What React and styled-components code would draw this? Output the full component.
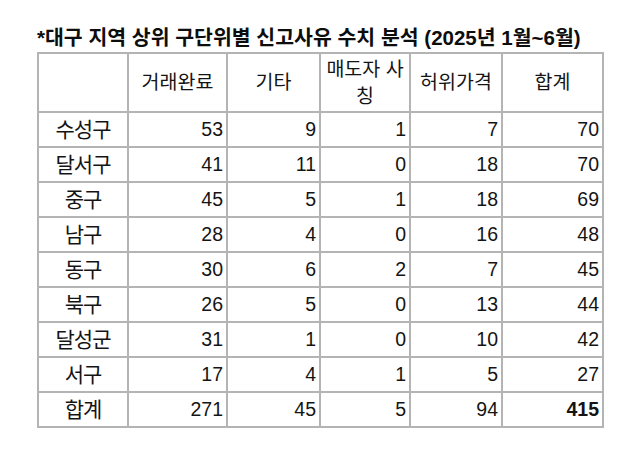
import React from 'react';
import styled, { createGlobalStyle } from 'styled-components';

const GlobalStyle = createGlobalStyle`
  html, body {
    margin: 0;
    padding: 0;
    background: #ffffff;
  }
  body {
    font-family: "Liberation Sans", "Noto Sans CJK KR", sans-serif;
    color: #111111;
  }
`;

const Page = styled.div`
  width: 640px;
  height: 470px;
  box-sizing: border-box;
  padding: 24px 0 0 37px;
  display: flex;
  flex-direction: column;
`;

const Title = styled.div`
  font-size: 20.5px;
  font-weight: 700;
  line-height: 28px;
  color: #0d0d0d;
  white-space: nowrap;
`;

const Table = styled.table`
  width: 565px;
  border-collapse: collapse;
  table-layout: fixed;
  font-size: 19.5px;
  color: #141414;
`;

const HeadCell = styled.th`
  height: 57px;
  padding: 0 3px;
  border: 2px solid #b4b4b4;
  font-weight: 400;
  line-height: 27px;
  text-align: center;
  vertical-align: middle;
`;

const Cell = styled.td`
  height: 33px;
  padding: 0 ${(p) => (p.$label ? '2px' : '3px')};
  border: 2px solid #b4b4b4;
  text-align: ${(p) => (p.$label ? 'center' : 'right')};
  font-size: ${(p) => (p.$label ? '21px' : '19.5px')};
  letter-spacing: ${(p) => (p.$label ? '-1px' : '0')};
  font-weight: ${(p) => (p.$bold ? 700 : 400)};
  line-height: 33px;
  vertical-align: middle;
`;

const columns = ['거래완료', '기타', '매도자 사칭', '허위가격', '합계'];
const widths = [90, 99, 93, 90, 92, 101];

const rows = [
  ['수성구', 53, 9, 1, 7, 70],
  ['달서구', 41, 11, 0, 18, 70],
  ['중구', 45, 5, 1, 18, 69],
  ['남구', 28, 4, 0, 16, 48],
  ['동구', 30, 6, 2, 7, 45],
  ['북구', 26, 5, 0, 13, 44],
  ['달성군', 31, 1, 0, 10, 42],
  ['서구', 17, 4, 1, 5, 27],
  ['합계', 271, 45, 5, 94, 415],
];

export default function App() {
  return (
    <>
      <GlobalStyle />
      <Page>
        <Title>*대구 지역 상위 구단위별 신고사유 수치 분석 (2025년 1월~6월)</Title>
        <Table>
          <colgroup>
            {widths.map((w, i) => (
              <col key={i} style={{ width: w }} />
            ))}
          </colgroup>
          <thead>
            <tr>
              <HeadCell />
              {columns.map((c) => (
                <HeadCell key={c}>{c}</HeadCell>
              ))}
            </tr>
          </thead>
          <tbody>
            {rows.map((r, ri) => (
              <tr key={r[0]}>
                {r.map((v, ci) => (
                  <Cell
                    key={ci}
                    $label={ci === 0}
                    $bold={ri === rows.length - 1 && ci === r.length - 1}
                  >
                    {v}
                  </Cell>
                ))}
              </tr>
            ))}
          </tbody>
        </Table>
      </Page>
    </>
  );
}
